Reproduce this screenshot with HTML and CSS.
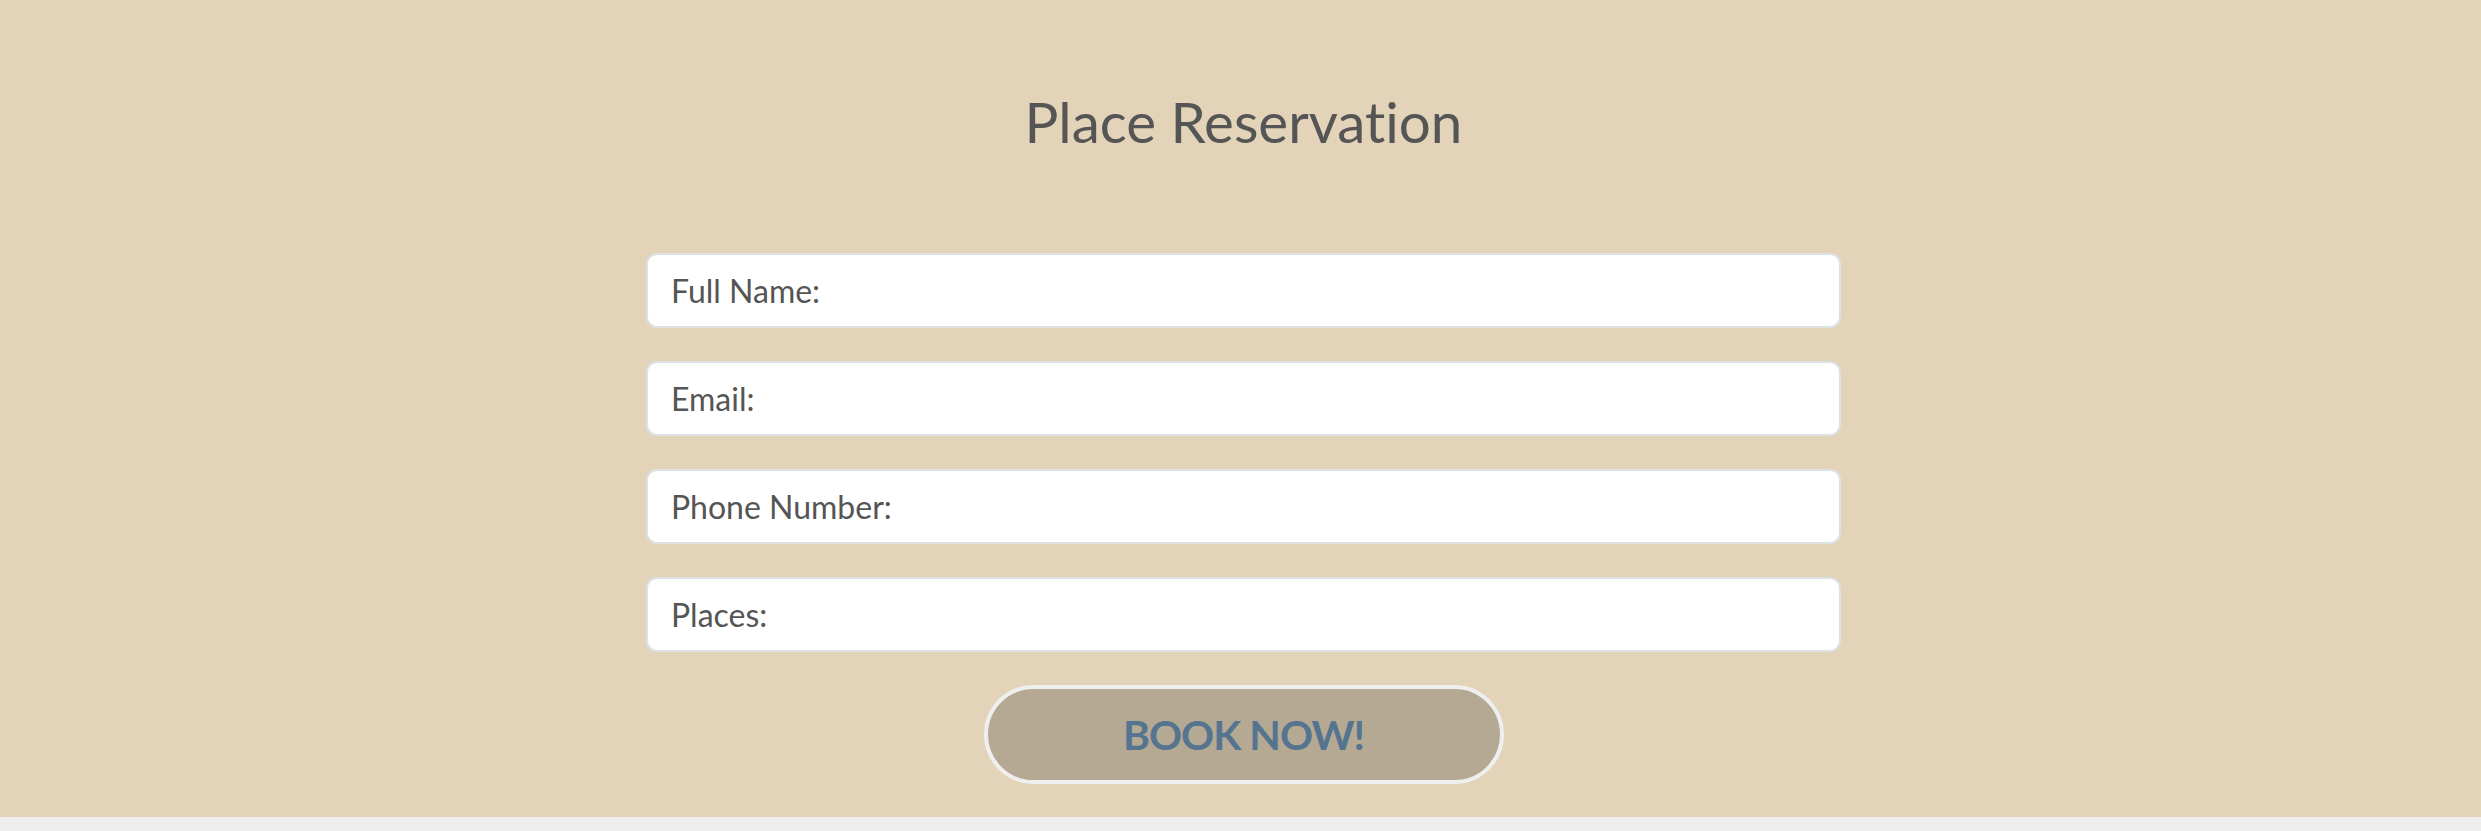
FILE: index.html
```html
<!DOCTYPE html>
<html>
<head>
<meta charset="utf-8">
<link rel="stylesheet" href="styles.css">
</head>
<body>
<section class="reservation">
  <h1 class="title">Place Reservation</h1>
  <form class="form">
    <input class="field" type="text" placeholder="Full Name:">
    <input class="field" type="email" placeholder="Email:">
    <input class="field" type="tel" placeholder="Phone Number:">
    <input class="field" type="number" placeholder="Places:">
    <button class="book" type="button">BOOK NOW!</button>
  </form>
</section>
</body>
</html>
```
FILE: styles.css
```css
html, body {
  margin: 0;
  padding: 0;
}
body {
  background: #eeeeee;
  font-family: Lato, "Open Sans", sans-serif;
  font-variant-ligatures: none;
  height: 831px;
}
.reservation {
  background: #e2d3b9;
  height: 817px;
  box-sizing: border-box;
  padding-top: 88px;
  display: flex;
  flex-direction: column;
  align-items: center;
}
.title {
  margin: 0 0 0 6px;
  font-size: 56.5px;
  font-weight: 400;
  line-height: 1.2;
  color: #555555;
}
.form {
  margin-top: 97px;
  margin-left: 6px;
  display: flex;
  flex-direction: column;
  align-items: center;
  gap: 33px;
}
.field {
  width: 1195px;
  height: 75px;
  box-sizing: border-box;
  border: 2px solid #dde1e6;
  border-radius: 11px;
  background: #ffffff;
  padding: 0 23px;
  font-family: Lato, sans-serif;
  font-variant-ligatures: none;
  font-size: 32px;
  color: #555555;
  outline: none;
}
.field::placeholder {
  color: #555555;
  opacity: 1;
}
.book {
  width: 520px;
  height: 99px;
  box-sizing: border-box;
  border: 4px solid #efefef;
  border-radius: 50px;
  background: #b5a994;
  color: #55748f;
  font-family: Lato, sans-serif;
  font-weight: 700;
  font-size: 41px;
  letter-spacing: -1px;
  cursor: pointer;
  padding: 0;
}
```
